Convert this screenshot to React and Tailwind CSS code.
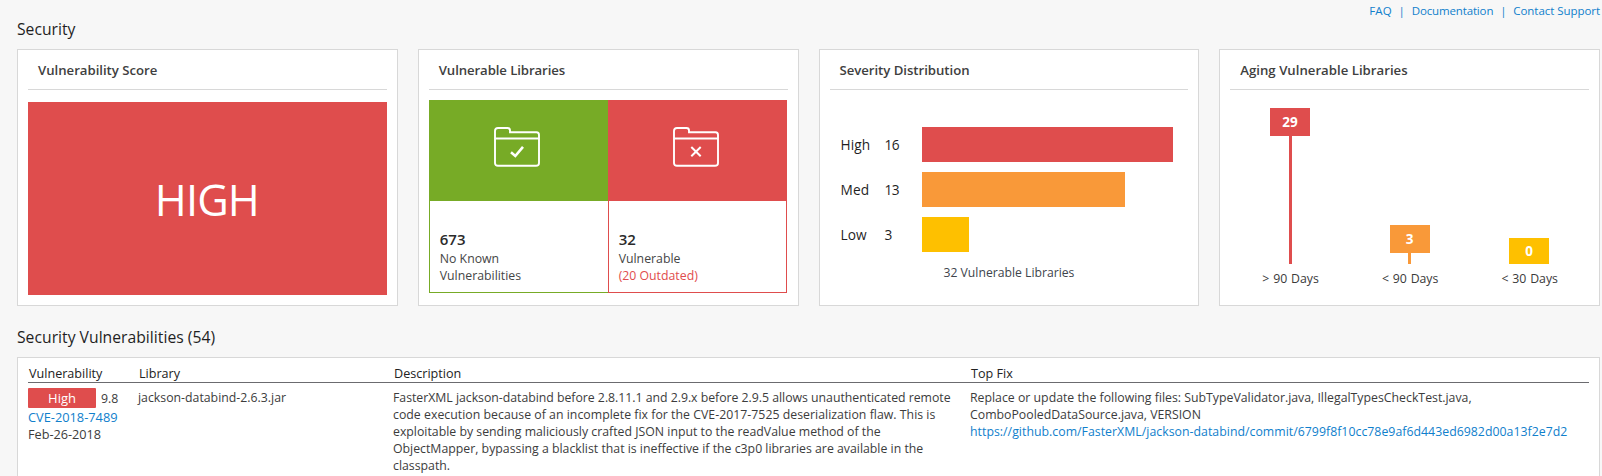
function Card({ title, tracking, children }) {
  return (
    <section className="flex h-[257px] flex-col border border-[#d8d8d8] bg-white px-[10px]">
      <h2 className={`h-10 shrink-0 border-b border-[#d8d8d8] pt-[1px] pl-[10px] text-[13.2px] leading-[38px] font-semibold text-[#404040] ${tracking}`}>
        {title}
      </h2>
      {children}
    </section>
  );
}

function FolderIcon({ children }) {
  return (
    <svg width="46" height="40" viewBox="0 0 46 40" fill="none" stroke="white" strokeWidth="1.9">
      <path d="M1 4Q1 1 4 1H13.5Q16 1 16 3.5V5.3H42.5Q45 5.3 45 8V36Q45 38.8 42 38.8H4Q1 38.8 1 36Z" />
      <path d="M1 11.5H45" strokeWidth="1.8" />
      {children}
    </svg>
  );
}

const severities = [
  { label: "High", count: 16, bar: "w-[251px] bg-[#df4d4d]" },
  { label: "Med", count: 13, bar: "w-[203px] bg-[#f99939]" },
  { label: "Low", count: 3, bar: "w-[47px] bg-[#fec000]" },
];

const ages = [
  { label: "> 90 Days", count: 29, color: "bg-[#df4d4d]", badge: "h-7", stem: "h-32" },
  { label: "< 90 Days", count: 3, color: "bg-[#f99939]", badge: "h-7", stem: "h-[11px]" },
  { label: "< 30 Days", count: 0, color: "bg-[#fec000]", badge: "h-[26px]", stem: "h-0" },
];

const description = [
  ["FasterXML jackson-databind before 2.8.11.1 and 2.9.x before 2.9.5 allows unauthenticated remote", "tracking-[-0.025px]"],
  ["code execution because of an incomplete fix for the CVE-2017-7525 deserialization flaw. This is", "tracking-[0.02px]"],
  ["exploitable by sending maliciously crafted JSON input to the readValue method of the", ""],
  ["ObjectMapper, bypassing a blacklist that is ineffective if the c3p0 libraries are available in the", ""],
  ["classpath.", ""],
];

export default function App() {
  return (
    <main className="flex h-[476px] w-[1602px] flex-col overflow-hidden bg-[#f7f7f7] pr-[2px] pl-[17px] font-['Open_Sans','Noto_Sans',sans-serif] whitespace-nowrap text-[#2b2b2b]">
      <nav className="mt-[3px] flex h-4 justify-end text-[11.5px] leading-4 text-[#1080cc]">
        <a className="tracking-[0.1px]">FAQ</a>
        <span className="w-5 text-center">|</span>
        <a className="tracking-[-0.14px]">Documentation</a>
        <span className="w-5 text-center">|</span>
        <a className="tracking-[-0.05px]">Contact Support</a>
      </nav>
      <h1 className="text-[15.7px] leading-5 font-medium text-[#1f1f1f]">Security</h1>

      <div className="mt-[10px] grid grid-cols-4 gap-5">
        <Card title="Vulnerability Score" tracking="tracking-[-0.02px]">
          <div className="mt-3 flex h-[193px] items-center justify-center bg-[#df4d4d] pt-[3px] pr-[1px] text-[43.4px] leading-none tracking-[-0.9px] text-white">
            HIGH
          </div>
        </Card>

        <Card title="Vulnerable Libraries" tracking="tracking-[-0.1px]">
          <div className="mt-[10px] mr-[1px] grid h-[193px] grid-cols-2 text-[12.3px] leading-[17px]">
            <div className="border border-r-0 border-[#77ab26]">
              <div className="flex h-[100px] justify-center bg-[#77ab26] pt-[26px] pr-[4px]">
                <FolderIcon>
                  <path d="M17 25.3L21.3 29L29 19.8" strokeWidth="2.6" />
                </FolderIcon>
              </div>
              <div className="pt-7 pl-[10px]">
                <p className="text-[15px] leading-5 font-semibold">673</p>
                <p className="mt-[1px] text-[#454545]">No Known</p>
                <p className="text-[#454545]">Vulnerabilities</p>
              </div>
            </div>
            <div className="border border-[#df4d4d]">
              <div className="flex h-[100px] justify-center bg-[#df4d4d] pt-[26px] pr-[3px]">
                <FolderIcon>
                  <path d="M18.3 20L27.7 29.2M27.7 20L18.3 29.2" strokeWidth="2" />
                </FolderIcon>
              </div>
              <div className="pt-7 pl-[10px]">
                <p className="text-[15px] leading-5 font-semibold">32</p>
                <p className="mt-[1px] text-[#454545]">Vulnerable</p>
                <p className="text-[#df4d4d]">(20 Outdated)</p>
              </div>
            </div>
          </div>
        </Card>

        <Card title="Severity Distribution" tracking="tracking-[-0.04px]">
          <div className="mt-[37px] flex flex-col gap-[10px] pl-[11px] text-[13.7px] font-medium text-[#1f1f1f]">
            {severities.map((s) => (
              <div key={s.label} className="flex h-[35px] items-center">
                <span className="w-[44px] pt-[2px] tracking-[0.1px]">{s.label}</span>
                <span className="w-[37px] pt-[2px] tracking-[-0.5px]">{s.count}</span>
                <div className={`h-full ${s.bar}`} />
              </div>
            ))}
          </div>
          <p className="mt-3 pl-[114px] text-[12.2px] leading-[17px] text-[#40444c]">32 Vulnerable Libraries</p>
        </Card>

        <Card title="Aging Vulnerable Libraries" tracking="tracking-[0.01px]">
          <div className="grid h-[197px] grid-cols-3 items-end text-center">
            {ages.map((a) => (
              <div key={a.label} className="flex flex-col items-center">
                <div className={`flex w-10 items-center justify-center text-[13.5px] font-bold text-white ${a.badge} ${a.color}`}>
                  {a.count}
                </div>
                <div className={`w-[3px] ${a.stem} ${a.color}`} />
                <p className="mt-[6px] pl-[1px] text-[12.3px] leading-[17px] tracking-[-0.03px] text-[#3a3a3a] [word-spacing:0.7px]">{a.label}</p>
              </div>
            ))}
          </div>
        </Card>
      </div>

      <h1 className="mt-[21px] text-[15.7px] leading-5 font-medium tracking-[0.02px] text-[#1f1f1f]">Security Vulnerabilities (54)</h1>

      <div className="mt-[10px] h-40 shrink-0 border border-[#d8d8d8] bg-white px-[10px] text-[12.3px] leading-[17px] text-[#3c3c3c]">
        <div className="grid h-[25px] grid-cols-[111px_255px_577px_1fr] border-b border-[#6b6b6f] pt-[7px] text-[12.6px] font-medium text-[#222]">
          <span className="pl-[1px]">Vulnerability</span>
          <span>Library</span>
          <span>Description</span>
          <span>Top Fix</span>
        </div>
        <div className="grid grid-cols-[110px_255px_577px_1fr] pt-[5px]">
          <div>
            <div className="flex h-5 items-center">
              <span className="flex h-5 w-[68px] items-center justify-center rounded-[1px] bg-[#df4d4d] pt-[1px] text-[13px] font-medium text-white">High</span>
              <span className="pl-[5px]">9.8</span>
            </div>
            <p className="mt-[1px] text-[12.8px] text-[#1080cc]">CVE-2018-7489</p>
            <p className="text-[12.7px]">Feb-26-2018</p>
          </div>
          <p className="pt-[1px] text-[12.3px]">jackson-databind-2.6.3.jar</p>
          <div className="pt-[1px]">
            {description.map(([line, tracking]) => (
              <p key={line} className={tracking}>{line}</p>
            ))}
          </div>
          <div className="pt-[1px]">
            <p>Replace or update the following files: SubTypeValidator.java, IllegalTypesCheckTest.java,</p>
            <p>ComboPooledDataSource.java, VERSION</p>
            <a className="tracking-[0.025px] text-[#1080cc]">https://github.com/FasterXML/jackson-databind/commit/6799f8f10cc78e9af6d443ed6982d00a13f2e7d2</a>
          </div>
        </div>
      </div>
    </main>
  );
}
